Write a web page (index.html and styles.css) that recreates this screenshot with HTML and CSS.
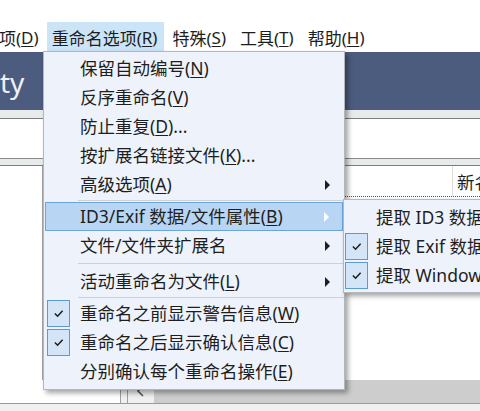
FILE: index.html
```html
<!DOCTYPE html>
<html lang="zh-CN">
<head>
  <meta charset="UTF-8" />
  <title>重命名选项</title>
  <link rel="stylesheet" href="styles.css">
</head>
<body>

<div class="app">
  <div class="titlegap"></div>

  <!-- Barre de menus -->
  <div class="menubar">
    <span class="mb-item first">项(<u>D</u>)</span>
    <span class="mb-item open">重命名选项(<u>R</u>)</span>
    <span class="mb-item">特殊(<u>S</u>)</span>
    <span class="mb-item">工具(<u>T</u>)</span>
    <span class="mb-item">帮助(<u>H</u>)</span>
  </div>

  <div class="band"><span class="band-title">ty</span></div>
  <div class="strip"></div>
  <div class="pathrow"></div>
  <div class="strip thin"></div>

  <div class="panes">
    <div class="tree"></div>
    <div class="list">
      <div class="list-head">
        <div class="col col-name"></div>
        <div class="col col-new">新名</div>
      </div>
    </div>
  </div>

  <div class="bottom">
    <div class="bottom-left"></div>
    <div class="hscroll">
      <span class="hs-btn"><svg viewBox="0 0 26 22"><path d="M15 6 L10 11 L15 16"/></svg></span>
      <span class="hs-track"></span>
    </div>
  </div>
  <div class="status"></div>
</div>

<!-- Menu déroulant principal -->
<div class="menu main-menu">
  <div class="item"><span class="mark"></span><span class="label">保留自动编号(<u>N</u>)</span></div>
  <div class="item"><span class="mark"></span><span class="label">反序重命名(<u>V</u>)</span></div>
  <div class="item"><span class="mark"></span><span class="label">防止重复(<u>D</u>)...</span></div>
  <div class="item"><span class="mark"></span><span class="label">按扩展名链接文件(<u>K</u>)...</span></div>
  <div class="item"><span class="mark"></span><span class="label">高级选项(<u>A</u>)</span><span class="arrow"></span></div>
  <div class="sep"></div>
  <div class="item active"><span class="mark"></span><span class="label">ID3/Exif 数据/文件属性(<u>B</u>)</span><span class="arrow"></span></div>
  <div class="item"><span class="mark"></span><span class="label">文件/文件夹扩展名</span><span class="arrow"></span></div>
  <div class="sep wide"></div>
  <div class="item"><span class="mark"></span><span class="label">活动重命名为文件(<u>L</u>)</span><span class="arrow"></span></div>
  <div class="sep"></div>
  <div class="item"><span class="mark checked"><svg viewBox="0 0 23 27"><path d="M7.5 13.5 L10.5 16.5 L16 10.5"/></svg></span><span class="label">重命名之前显示警告信息(<u>W</u>)</span></div>
  <div class="item"><span class="mark checked"><svg viewBox="0 0 23 27"><path d="M7.5 13.5 L10.5 16.5 L16 10.5"/></svg></span><span class="label">重命名之后显示确认信息(<u>C</u>)</span></div>
  <div class="item"><span class="mark"></span><span class="label">分别确认每个重命名操作(<u>E</u>)</span></div>
</div>

<!-- Sous-menu ID3/Exif -->
<div class="menu sub-menu">
  <div class="item"><span class="mark"></span><span class="label">提取 ID3 数据</span></div>
  <div class="item"><span class="mark checked"><svg viewBox="0 0 23 27"><path d="M7.5 13.5 L10.5 16.5 L16 10.5"/></svg></span><span class="label">提取 Exif 数据</span></div>
  <div class="item"><span class="mark checked"><svg viewBox="0 0 23 27"><path d="M7.5 13.5 L10.5 16.5 L16 10.5"/></svg></span><span class="label">提取 Windows 属性</span></div>
</div>

</body>
</html>
```

FILE: styles.css
```css
html, body {
  margin: 0;
  padding: 0;
  width: 480px;
  height: 411px;
  overflow: hidden;
  font-family: 'Noto Sans', 'Noto Sans CJK SC', sans-serif;
  color: #1e1e1e;
  background: white;
}

body {
  position: relative;
}

u {
  text-decoration: underline;
  text-underline-offset: 2px;
  text-decoration-thickness: 1px;
}

.app {
  display: flex;
  flex-direction: column;
  height: 411px;
}

.titlegap {
  height: 22px;
  background: white;
}

/* barre de menus */
.menubar {
  display: flex;
  height: 30px;
  gap: 2px;
  background: white;
  font-size: 17px;
  white-space: nowrap;
}

.mb-item {
  display: flex;
  align-items: center;
  padding: 0 6px;
}

.mb-item.first {
  padding-left: 0;
  margin-left: -1px;
}

.mb-item.open {
  background: #cce4f7;
  padding: 0 7px 0 5px;
}

.band {
  height: 58px;
  background: #4b5c7f;
  display: flex;
  align-items: center;
}

.band-title {
  color: #eef1f6;
  font-size: 28px;
  margin-top: 2px;
}

.strip {
  height: 8px;
  background: #e7ebec;
  border-bottom: 1px solid #7d7d7d;
}

.strip.thin {
  height: 6px;
}

.pathrow {
  height: 39px;
  background: white;
  border-bottom: 1px solid #8a8a8a;
}

.panes {
  display: flex;
  flex: 1;
  min-height: 0;
}

.tree {
  width: 42px;
  background: white;
  border-right: 1px solid #a5a5a5;
}

.list {
  flex: 1;
  min-width: 0;
  background: white;
}

.list-head {
  display: flex;
  height: 30px;
  border-bottom: 1px dotted #555;
}

.col {
  display: flex;
  align-items: center;
  font-size: 17.5px;
  white-space: nowrap;
  overflow: hidden;
}

.col-name {
  flex: none;
  width: 409px;
}

.col-new {
  flex: 1;
  min-width: 0;
  border-left: 1px solid #dcdcdc;
  padding-left: 4px;
}

.bottom {
  display: flex;
  height: 23px;
  background: #f0f0f0;
}

.bottom-left {
  width: 120px;
  background: white;
  border-right: 1px solid #a0a0a0;
}

.hscroll {
  flex: 1;
  display: flex;
  margin-left: 6px;
  border-left: 1px solid #a0a0a0;
}

.hs-btn {
  width: 26px;
  background: #f0f0f0;
}

.hs-btn svg {
  display: block;
  width: 26px;
  height: 22px;
  fill: none;
  stroke: #555;
  stroke-width: 1.6;
}

.hs-track {
  flex: 1;
  background: #cdcdcd;
}

.status {
  height: 7px;
  background: #f0f0f0;
  border-top: 1px solid #9a9a9a;
}

/* menus déroulants */
.menu {
  position: absolute;
  background: #eef3fb;
  border: 1px solid #b4b8be;
  box-shadow: 3px 3px 5px rgba(0, 0, 0, 0.36);
  font-size: 17.5px;
  white-space: nowrap;
}

.main-menu {
  left: 43px;
  top: 51px;
  width: 300px;
  padding: 2px 0 3px;
}

.sub-menu {
  left: 343px;
  top: 199px;
  width: 170px;
  padding: 3px 0 2px;
}

.item {
  display: flex;
  align-items: center;
  height: 29px;
  padding-left: 3px;
  box-sizing: border-box;
}

.label {
  margin-top: -2px;
}

.sub-menu .item {
  padding-left: 1px;
}

.item.active {
  background: #b8d6f3;
  border: 1px solid #6aa5dc;
  margin: 0 1px;
  padding-left: 1px;
}

.mark {
  width: 23px;
  height: 27px;
  margin-right: 10px;
  box-sizing: border-box;
  flex: none;
}

.sub-menu .mark {
  margin-right: 8px;
}

.mark.checked {
  background: #d3e5f6;
  border: 1px solid #5b9ad5;
}

.mark svg {
  display: block;
  width: 21px;
  height: 25px;
  fill: none;
  stroke: #1f1f1f;
  stroke-width: 1.7;
}

.arrow {
  margin-left: auto;
  margin-right: 14px;
  width: 0;
  height: 0;
  border-left: 5px solid #1e1e1e;
  border-top: 5px solid transparent;
  border-bottom: 5px solid transparent;
}

.item.active .arrow {
  border-left-color: white;
  margin-right: 13px;
}

.sep {
  height: 3px;
  margin-left: 34px;
  display: flex;
  align-items: center;
}

.sep::before {
  content: '';
  flex: 1;
  height: 1px;
  background: #cdd1d7;
}

.sep.wide {
  height: 7px;
}
```
